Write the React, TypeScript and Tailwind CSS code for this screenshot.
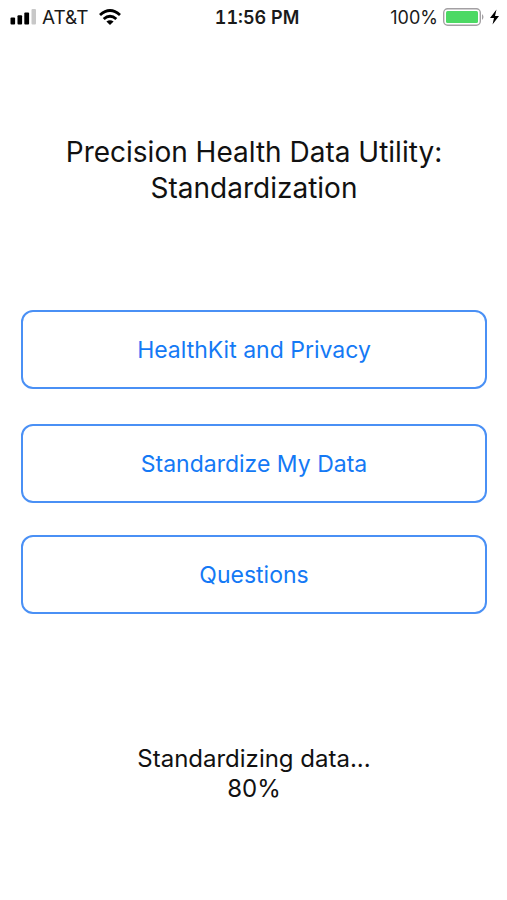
const actions = ["HealthKit and Privacy", "Standardize My Data", "Questions"];

function StatusBar() {
  return (
    <header className="grid h-9 grid-cols-[1fr_auto_1fr] items-center pr-2 pl-[10px] text-[18px] leading-6 text-[#1a1a1a]">
      <div className="flex items-center gap-[10px]">
        <div className="flex items-center gap-[6px]">
          <svg className="mb-[2px]" width="26" height="16" viewBox="0 0 26 16" aria-hidden="true">
            <rect x="0.5" y="8.5" width="4.6" height="7" rx="1" />
            <rect x="7.5" y="6.2" width="4.6" height="9.3" rx="1" />
            <rect x="14.3" y="3.5" width="4.8" height="12" rx="1" />
            <rect x="21.5" y="0" width="4.5" height="15.5" rx="1" fill="#c8c8c8" />
          </svg>
          <span className="text-[19px]">AT&amp;T</span>
        </div>
        <svg className="mb-[2px]" width="22" height="17" viewBox="0 0 22 17" fill="none" stroke="#000" strokeWidth="2.9" aria-hidden="true">
          <path d="M1 6Q11-2.8 21 6M4.7 10Q11 4.4 17.3 10" />
          <path d="M11 16 7.4 12.5Q11 9.8 14.6 12.5Z" fill="#000" stroke="none" />
        </svg>
      </div>
      <time className="pl-[5px] font-semibold tabular-nums">11:56 PM</time>
      <div className="flex items-center justify-end gap-[5px]">
        <span>100%</span>
        <svg className="mb-[2px]" width="42" height="18" viewBox="0 0 42 18" aria-hidden="true">
          <rect x="0.7" y="0.7" width="36.6" height="16.6" rx="4" fill="none" stroke="#a3a0a3" strokeWidth="1.4" />
          <rect x="3" y="3" width="32" height="12" rx="1.5" fill="#4cd964" />
          <path d="M39 6Q42 9 39 12Z" fill="#a3a0a3" />
        </svg>
        <svg className="mb-[2px]" width="9" height="16" viewBox="0 0 9 16" aria-hidden="true">
          <path d="M6.5 0.5 0 9H4L2.5 15.5 9 7H5Z" fill="#000" />
        </svg>
      </div>
    </header>
  );
}

export default function App() {
  return (
    <div className="min-h-screen bg-white font-[Inter,'Liberation_Sans',sans-serif] text-[#111]">
      <StatusBar />
      <main className="pr-5 pl-[21px]">
        <h1 className="pt-[98px] text-center text-[28px] leading-9">
          Precision Health Data Utility:
          <br />
          Standardization
        </h1>
        <div className="mt-[104px] flex flex-col gap-8">
          {actions.map((label) => (
            <button key={label} type="button" className="h-[79px] w-full rounded-xl border-2 border-[#4a90f5] pt-[2px] text-[23px] text-[#1479f5] first:mb-[3px]">
              {label}
            </button>
          ))}
        </div>
        <p role="status" className="mt-[130px] text-center text-[24px] leading-[30px]">
          Standardizing data...
          <br />
          80%
        </p>
      </main>
    </div>
  );
}
